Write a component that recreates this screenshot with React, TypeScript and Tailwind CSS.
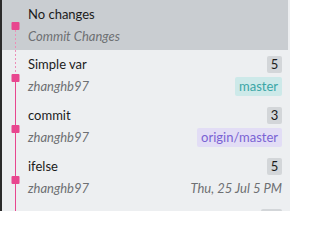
import React from "react";

type Row = {
  title: string;
  author: string;
  count: string;
  tag?: { text: string; cls: string };
  date?: string;
};

const rows: Row[] = [
  { title: "Simple var", author: "zhanghb97", count: "5", tag: { text: "master", cls: "bg-[#cde9e9] text-[#3aa6a6]" } },
  { title: "commit", author: "zhanghb97", count: "3", tag: { text: "origin/master", cls: "bg-[#e2ddf5] text-[#7a62d4]" } },
  { title: "ifelse", author: "zhanghb97", count: "5", date: "Thu, 25 Jul 5 PM" },
  { title: "loop", author: "zhanghb97", count: "12", date: "Thu, 25 Jul 4 PM" },
];

const PINK = "#e8468f";

function Graph({ kind, h }: { kind: "first" | "second" | "solid"; h: number }) {
  const dotY = kind === "first" ? 22 : 24;
  return (
    <svg width={26} height={h} className="shrink-0 block">
      {kind === "first" && (
        <line x1={13.5} y1={dotY + 8} x2={13.5} y2={h} stroke="#ec8fb8" strokeWidth={1} strokeDasharray="2 2" />
      )}
      {kind === "second" && (
        <>
          <line x1={13.5} y1={0} x2={13.5} y2={dotY} stroke="#ec8fb8" strokeWidth={1} strokeDasharray="2 2" />
          <line x1={13.5} y1={dotY} x2={13.5} y2={h} stroke={PINK} strokeWidth={1} />
        </>
      )}
      {kind === "solid" && <line x1={13.5} y1={0} x2={13.5} y2={h} stroke={PINK} strokeWidth={1} />}
      <rect x={9.5} y={dotY} width={8} height={8} rx={1} fill={PINK} />
    </svg>
  );
}

export default function App() {
  return (
    <div
      className="flex w-[290px] h-[211px] overflow-hidden bg-[#edeff1]"
      style={{ fontFamily: "Lato, 'Noto Sans', sans-serif" }}
    >
      <div className="w-[2px] shrink-0 bg-[#2b2b2b]" />
      <div className="flex flex-col flex-1 min-w-0">
        <div className="flex h-[50px] shrink-0 bg-[#c9cdd1] mr-[2px]">
          <Graph kind="first" h={50} />
          <div className="flex flex-col pt-[5px] gap-[4px]">
            <div className="h-[18px] flex items-center text-[13px] text-[#1b1b1b] leading-none">No changes</div>
            <div className="h-[18px] flex items-center text-[13px] italic text-[#6e7073] leading-none">Commit Changes</div>
          </div>
        </div>
        {rows.map((r, i) => (
          <div key={i} className="flex h-[51px] shrink-0">
            <Graph kind={i === 0 ? "second" : "solid"} h={51} />
            <div className="flex-1 min-w-0 flex flex-col pt-[6px] pr-[8px] gap-[4px]">
              <div className="h-[17px] flex items-center justify-between">
                <span className="text-[13px] text-[#1b1b1b] leading-none">{r.title}</span>
                <span className="h-[17px] min-w-[15px] px-[3px] flex items-center justify-center rounded-[2px] bg-[#d3d6d9] text-[13px] text-[#1b1b1b] leading-none">
                  {r.count}
                </span>
              </div>
              <div className="h-[19px] flex items-center justify-between">
                <span className="text-[13px] italic text-[#6e7073] leading-none">{r.author}</span>
                {r.tag ? (
                  <span className={`h-[19px] px-[4px] flex items-center rounded-[2px] text-[13px] leading-none ${r.tag.cls}`}>
                    {r.tag.text}
                  </span>
                ) : (
                  <span className="text-[13px] italic text-[#6e7073] leading-none">{r.date}</span>
                )}
              </div>
            </div>
          </div>
        ))}
      </div>
    </div>
  );
}
